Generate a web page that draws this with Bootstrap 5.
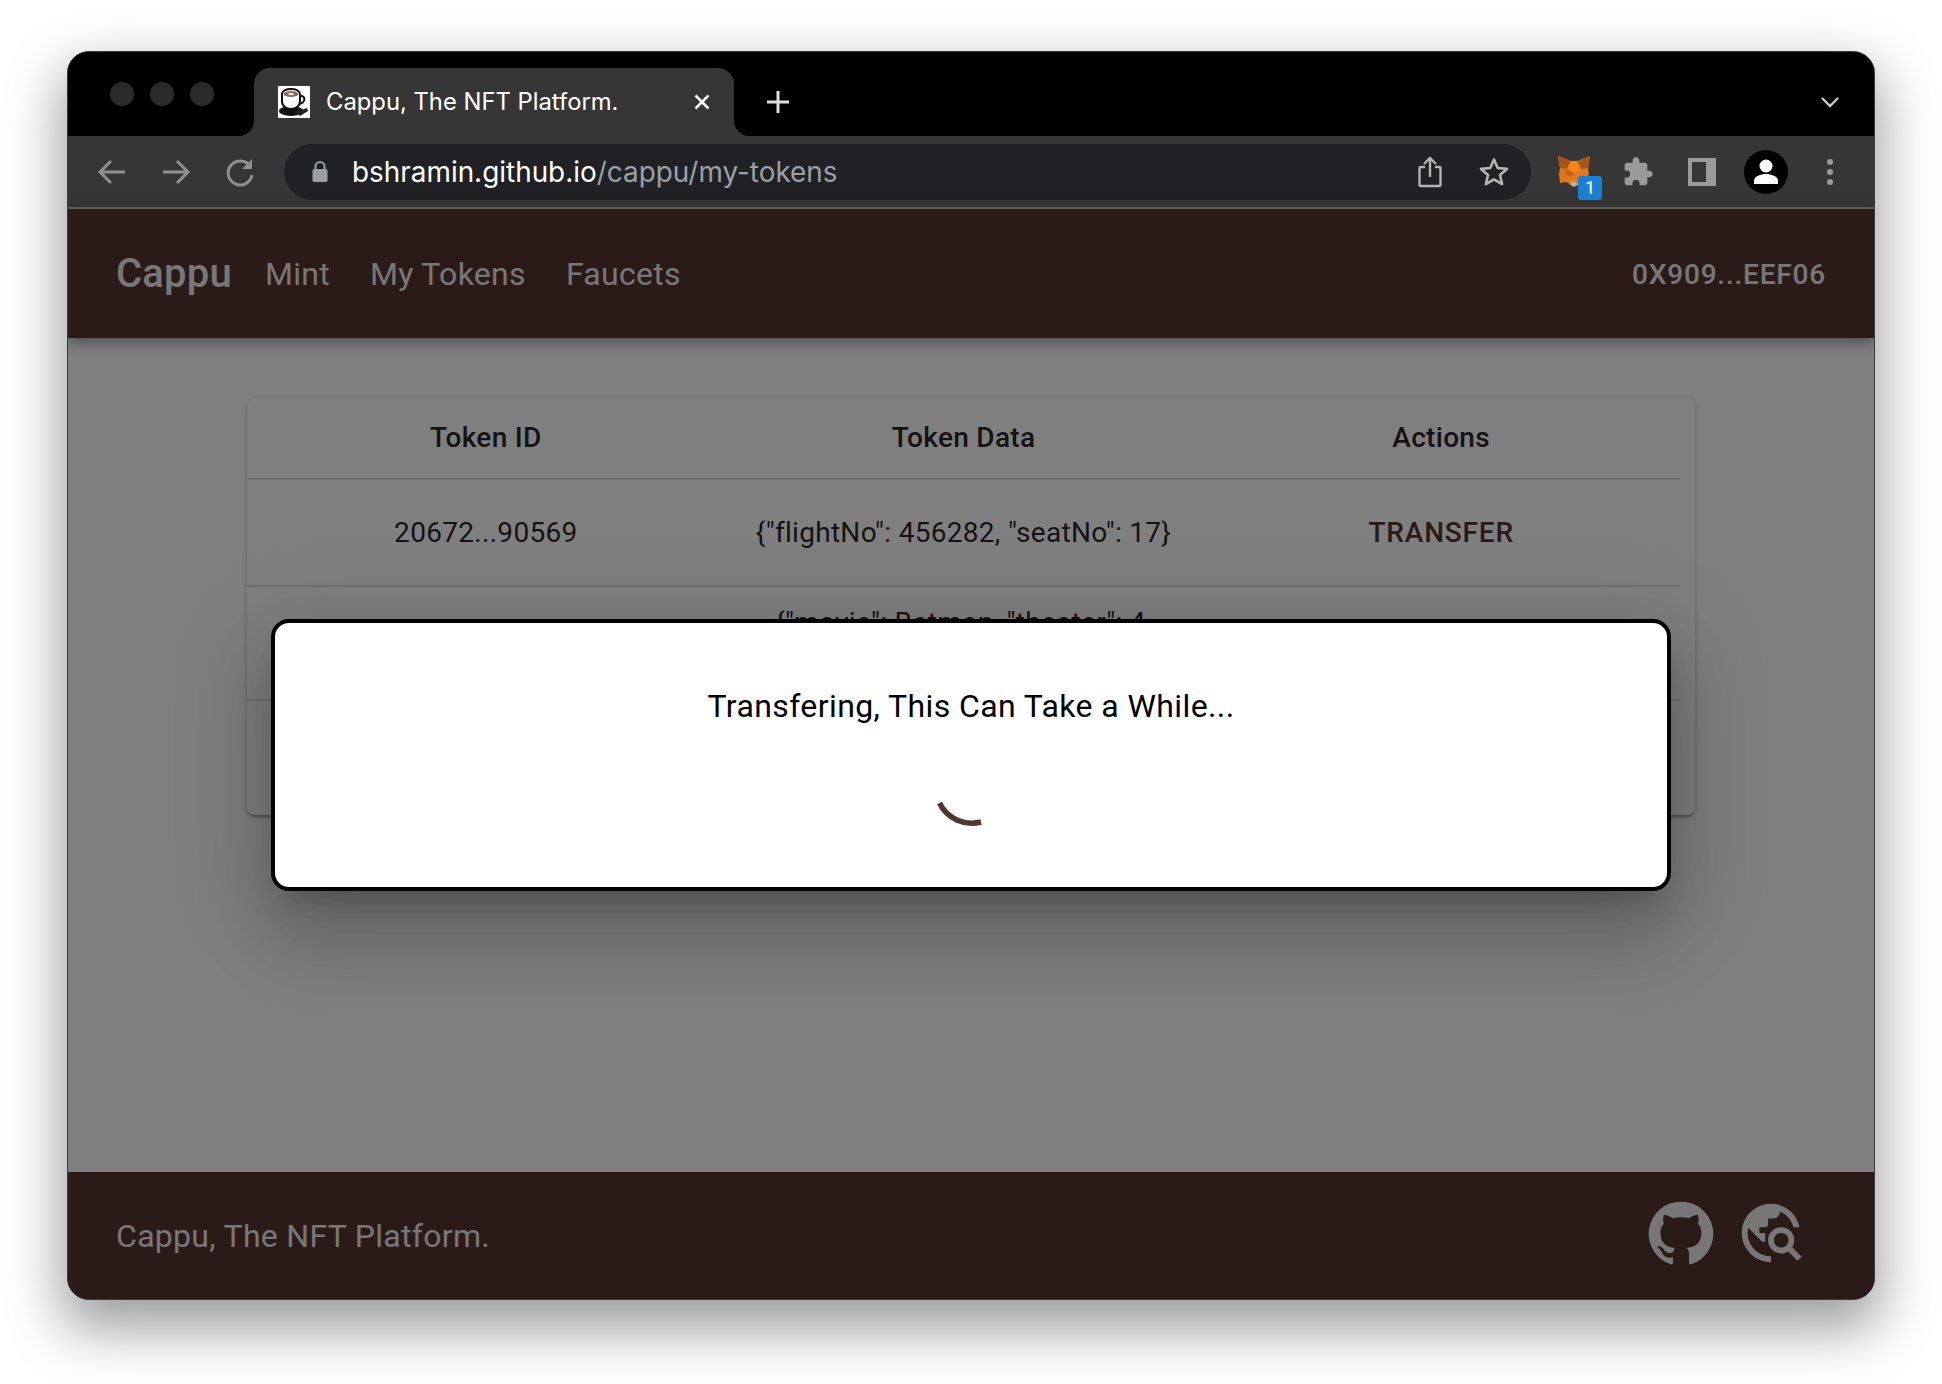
<!DOCTYPE html>
<html lang="en">
<head>
    <meta charset="UTF-8">
    <meta name="viewport" content="width=device-width, initial-scale=1.0">
    <title>Cappu, The NFT Platform.</title>
    <link rel="stylesheet" href="https://cdn.jsdelivr.net/npm/bootstrap@5.3.3/dist/css/bootstrap.min.css">
    <script src="https://cdn.jsdelivr.net/npm/bootstrap@5.3.3/dist/js/bootstrap.bundle.min.js"></script>
    <style>
        html, body { height: 100%; }
        body { background: #fff; font-family: Roboto, sans-serif; padding: 51px 67px 84px 67px; overflow: hidden; }

        .browser-win { width: 1808px; height: 1249px; border: 1px solid #3a3a3a; border-radius: 22px; overflow: hidden; box-shadow: 0 24px 54px 6px rgba(0,0,0,.38); background: #000; }

        .tab-strip { height: 84px; background: #000; padding-left: 42px; padding-right: 34px; flex-shrink: 0; }
        .light-dot { width: 24px; height: 24px; border-radius: 50%; background: #2a2a2a; }
        .lights-box { gap: 16px; margin-right: 40px; }
        .chrome-tab { position: relative; width: 480px; height: 68px; background: #363636; border-radius: 16px 16px 0 0; padding: 0 24px; color: #fff; font-family: Inter, sans-serif; font-size: 23.800px; }
        .chrome-tab::before, .chrome-tab::after { content: ""; position: absolute; bottom: 0; width: 16px; height: 16px; }
        .chrome-tab::before { left: -16px; background: radial-gradient(circle at 0 0, #000 16px, #363636 16.5px); }
        .chrome-tab::after { right: -16px; background: radial-gradient(circle at 100% 0, #000 16px, #363636 16.5px); }
        .new-tab { margin: 0 0 22px 32px; }
        .tab-chevron { margin-bottom: 28px; }

        .tool-bar { height: 73px; background: #363636; border-bottom: 2px solid #66605e; padding: 0 12px 0 28px; flex-shrink: 0; }
        .nav-arrows { gap: 32px; margin-right: 28px; }
        .url-pill { height: 56px; border-radius: 28px; background: #202124; padding: 0 22px 0 27px; font-family: Inter, sans-serif; font-size: 27.900px; color: #9aa0a6; margin-right: 11px; }
        .url-host { color: #fff; }
        .url-text { padding-top: 2px; }
        .lock-icon { margin-right: 19px; }
        .star-icon { margin-left: 37px; }
        .ext-slot { position: relative; width: 64px; height: 56px; }
        .ext-badge { position: absolute; left: 36px; top: 32px; width: 24px; height: 24px; border-radius: 3px; background: #1a7fd4; color: #fff; font-size: 18px; line-height: 24px; text-align: center; }

        .page-area { position: relative; min-height: 0; }
        .page-dim { position: absolute; inset: 0; background: rgba(0,0,0,.5); z-index: 5; }

        .app-bar { height: 129px; padding: 0 48px; background: #543630; box-shadow: 0 4px 8px -2px rgba(0,0,0,.2), 0 8px 10px 0 rgba(0,0,0,.14), 0 2px 20px 0 rgba(0,0,0,.12); z-index: 2; flex-shrink: 0; }
        .app-bar .navbar-brand { font-size: 40px; font-weight: 500; color: #eee; margin-right: 13px; padding: 0; letter-spacing: .2px; }
        .app-bar .nav-link { font-size: 32px; color: #eee; padding: 0 20px; letter-spacing: .3px; }
        .wallet-addr { font-size: 28px; font-weight: 500; color: #eee; letter-spacing: .8px; padding-top: 2px; }

        .page-main { background: #fff; padding: 60px 179px 0 179px; min-height: 0; }
        .token-card { border: 0; border-radius: 8px; padding-right: 15px; box-shadow: 0 4px 2px -2px rgba(0,0,0,.2), 0 2px 4px 0 rgba(0,0,0,.14), 0 2px 6px 0 rgba(0,0,0,.12); }
        .token-table { table-layout: fixed; margin: 0; font-size: 28px; line-height: 40px; text-align: center; letter-spacing: .3px; color: rgba(0,0,0,.87); }
        .token-table th { font-weight: 500; padding: 20px 28px; border-bottom: 2px solid #e0e0e0; }
        .token-table td { padding: 16px 28px; border-bottom: 2px solid #e0e0e0; vertical-align: middle; }
        .token-table tr:last-child td { border-bottom: 0; padding-bottom: 18px; }
        .btn-transfer { height: 73px; padding: 0 20px; font-size: 28px; font-weight: 500; color: #543630; letter-spacing: .8px; border: 0; text-transform: uppercase; }

        .page-foot { height: 127px; padding: 0 68px 0 48px; background: #543630; color: #eee; font-size: 32px; letter-spacing: .3px; flex-shrink: 0; }
        .foot-icons { gap: 20px; margin-bottom: 6px; }

        .wait-modal { width: 1400px; height: 272px; margin-top: 1px; background: #fff; border: 4px solid #000; border-radius: 18px; z-index: 6; color: #000; font-size: 32px; letter-spacing: .4px; text-align: center; padding-top: 63px; box-shadow: 0 22px 30px -14px rgba(0,0,0,.2), 0 48px 76px 6px rgba(0,0,0,.14), 0 18px 92px 16px rgba(0,0,0,.12); }
        .wait-text { line-height: 40px; margin-bottom: 21px; }
    </style>
</head>
<body>
<div class="browser-win d-flex flex-column">

    <!-- tab strip -->
    <div class="tab-strip d-flex align-items-end">
        <div class="lights-box d-flex align-self-center">
            <div class="light-dot"></div>
            <div class="light-dot"></div>
            <div class="light-dot"></div>
        </div>
        <div class="chrome-tab d-flex align-items-center">
            <svg class="me-3" width="32" height="32" viewBox="0 0 32 32">
                <rect width="32" height="32" fill="#fff"/>
                <ellipse cx="13" cy="25" rx="12" ry="5" fill="#111"/>
                <path d="M4 8c0-3 4-5 9-5s9 2 9 5v7c0 5-4 8-9 8s-9-3-9-8z" fill="#fff" stroke="#111" stroke-width="2"/>
                <ellipse cx="13" cy="8" rx="7.500" ry="3" fill="#8a6a58"/>
                <ellipse cx="13" cy="8" rx="3" ry="1.200" fill="#e9d9cc"/>
                <path d="M22 10c6-1 6 7-1 8" fill="none" stroke="#111" stroke-width="2"/>
                <path d="M17 26l12-4 1 3-8 5z" fill="#222"/>
            </svg>
            <span>Cappu, The NFT Platform.</span>
            <svg class="ms-auto" width="16" height="16" viewBox="0 0 16 16"><path d="M1.500 1.500l13 13M14.500 1.500l-13 13" stroke="#fff" stroke-width="2.600"/></svg>
        </div>
        <svg class="new-tab" width="24" height="24" viewBox="0 0 24 24"><path d="M12 1v22M1 12h22" stroke="#ddd" stroke-width="3"/></svg>
        <svg class="tab-chevron ms-auto" width="20" height="12" viewBox="0 0 20 12"><path d="M2 2l8 8 8-8" fill="none" stroke="#ccc" stroke-width="2.400"/></svg>
    </div>

    <!-- toolbar -->
    <div class="tool-bar d-flex align-items-center">
        <div class="nav-arrows d-flex">
            <svg width="32" height="32" viewBox="0 0 32 32"><path d="M29 16H5M15 5L4 16l11 11" fill="none" stroke="#8f8f8f" stroke-width="3"/></svg>
            <svg width="32" height="32" viewBox="0 0 32 32"><path d="M3 16h24M17 5l11 11-11 11" fill="none" stroke="#8f8f8f" stroke-width="3"/></svg>
            <svg width="32" height="32" viewBox="0 0 32 32"><path d="M26 10a12 12 0 1 0 2 9" fill="none" stroke="#8f8f8f" stroke-width="3"/><path d="M28 3v10H18z" fill="#8f8f8f"/></svg>
        </div>
        <div class="url-pill flex-grow-1 d-flex align-items-center">
            <svg class="lock-icon" width="18" height="24" viewBox="0 0 18 24"><path d="M4.500 10V6.500a4.500 4.500 0 0 1 9 0V10" fill="none" stroke="#9aa0a6" stroke-width="2"/><rect x="1.500" y="9" width="15" height="13" rx="2" fill="#9aa0a6"/></svg>
            <span class="url-text ms-1"><span class="url-host">bshramin.github.io</span>/cappu/my-tokens</span>
            <svg class="ms-auto" width="24" height="32" viewBox="0 0 24 32"><path d="M7 11H3a1.500 1.500 0 0 0-1.500 1.500v16A1.500 1.500 0 0 0 3 30h18a1.500 1.500 0 0 0 1.500-1.500v-16A1.500 1.500 0 0 0 21 11h-4M12 21V3M6 8l6-6 6 6" fill="none" stroke="#b4b4b4" stroke-width="2.400"/></svg>
            <svg class="star-icon" width="30" height="30" viewBox="0 0 30 30"><path d="M15 2.500l3.700 8.500 9.300.9-7 6.100 2.100 9.100-8.100-4.800-8.100 4.800 2.100-9.100-7-6.100 9.300-.9z" fill="none" stroke="#b4b4b4" stroke-width="2.600" stroke-linejoin="round"/></svg>
        </div>
        <div class="ext-slot d-flex align-items-center justify-content-center">
            <svg width="32" height="32" viewBox="0 0 32 32">
                <path d="M0 0l13 5h6L32 0l-2 12 1 6-4 8-5 3h-8l-6-3-6 1L1 18l1-6z" fill="#e2761b"/>
                <path d="M0 0l13 5-4 8-7-1z" fill="#a8551a"/>
                <path d="M32 0L19 5l4 8 7-1z" fill="#a8551a"/>
                <path d="M13 5h6l4 8-7 4-7-4z" fill="#f6851b"/>
                <path d="M9 13l7 4-3 4-6-3z" fill="#cd6116"/>
                <path d="M11 28l5-3 5 3-5 3z" fill="#c0ac9d"/>
            </svg>
            <span class="ext-badge">1</span>
        </div>
        <div class="ext-slot d-flex align-items-center justify-content-center">
            <svg width="32" height="32" viewBox="0 0 24 24"><path d="M20.500 11H19V7c0-1.100-.9-2-2-2h-4V3.500C13 2.120 11.880 1 10.500 1S8 2.120 8 3.500V5H4c-1.100 0-1.990.9-1.990 2v3.800H3.500c1.490 0 2.700 1.210 2.700 2.700s-1.210 2.700-2.700 2.700H2V20c0 1.100.9 2 2 2h3.800v-1.500c0-1.490 1.210-2.700 2.700-2.700 1.490 0 2.700 1.210 2.700 2.700V22H17c1.100 0 2-.9 2-2v-4h1.500c1.380 0 2.500-1.120 2.500-2.500S21.880 11 20.500 11z" fill="#9a9a9a"/></svg>
        </div>
        <div class="ext-slot d-flex align-items-center justify-content-center">
            <svg width="28" height="28" viewBox="0 0 28 28"><rect x="2" y="2" width="24" height="24" fill="none" stroke="#9a9a9a" stroke-width="4"/><rect x="18" y="2" width="8" height="24" fill="#9a9a9a"/></svg>
        </div>
        <div class="ext-slot d-flex align-items-center justify-content-center">
            <svg width="44" height="44" viewBox="0 0 44 44"><circle cx="22" cy="22" r="22" fill="#000"/><circle cx="22" cy="16" r="6.500" fill="#fff"/><path d="M10 34v-3c0-5 7-7 12-7s12 2 12 7v3z" fill="#fff"/></svg>
        </div>
        <div class="ext-slot d-flex align-items-center justify-content-center">
            <svg width="8" height="30" viewBox="0 0 8 30"><circle cx="4" cy="5" r="3" fill="#9a9a9a"/><circle cx="4" cy="15" r="3" fill="#9a9a9a"/><circle cx="4" cy="25" r="3" fill="#9a9a9a"/></svg>
        </div>
    </div>

    <!-- the page itself -->
    <div class="page-area flex-grow-1 d-flex flex-column">
        <nav class="navbar app-bar">
            <div class="d-flex align-items-center">
                <a class="navbar-brand" href="#">Cappu</a>
                <a class="nav-link" href="#">Mint</a>
                <a class="nav-link" href="#">My Tokens</a>
                <a class="nav-link" href="#">Faucets</a>
            </div>
            <span class="wallet-addr">0X909...EEF06</span>
        </nav>

        <main class="page-main flex-grow-1">
            <div class="card token-card">
                <table class="table token-table">
                    <thead>
                        <tr><th>Token ID</th><th>Token Data</th><th>Actions</th></tr>
                    </thead>
                    <tbody>
                        <tr>
                            <td>20672...90569</td>
                            <td>{"flightNo": 456282, "seatNo": 17}</td>
                            <td><button class="btn btn-transfer">Transfer</button></td>
                        </tr>
                        <tr>
                            <td>20672...90570</td>
                            <td>{"movie": Batman, "theater": 4, "seatNo": 21}</td>
                            <td><button class="btn btn-transfer">Transfer</button></td>
                        </tr>
                        <tr>
                            <td>20672...90571</td>
                            <td>{"movie": Batman, "theater": 4, "seatNo": 22}</td>
                            <td><button class="btn btn-transfer">Transfer</button></td>
                        </tr>
                    </tbody>
                </table>
            </div>
        </main>

        <footer class="page-foot d-flex align-items-center justify-content-between">
            <span>Cappu, The NFT Platform.</span>
            <div class="foot-icons d-flex">
                <svg width="70" height="70" viewBox="0 0 24 24"><path fill="#eee" d="M12 1.270a11 11 0 00-3.480 21.460c.55.09.73-.28.73-.55v-1.840c-3.030.64-3.670-1.460-3.670-1.460-.55-1.290-1.280-1.650-1.280-1.650-.92-.65.1-.65.1-.65 1.100 0 1.730 1.100 1.730 1.100.92 1.650 2.570 1.200 3.210.92a2 2 0 01.64-1.470c-2.470-.27-5.040-1.190-5.040-5.500 0-1.100.46-2.100 1.200-2.840a3.760 3.760 0 010-2.930s.91-.28 3.110 1.100c1.800-.49 3.700-.49 5.500 0 2.100-1.380 3.020-1.100 3.020-1.100a3.760 3.760 0 010 2.930c.83.74 1.200 1.740 1.200 2.940 0 4.210-2.570 5.130-5.040 5.400.45.37.82.92.82 2.020v3.030c0 .27.1.64.73.55A11 11 0 0012 1.270"/></svg>
                <svg width="70" height="70" viewBox="0 0 24 24"><path fill="#eee" d="M19.300 16.900c.4-.7.7-1.500.7-2.400 0-2.500-2-4.500-4.500-4.500S11 12 11 14.500s2 4.500 4.500 4.500c.9 0 1.700-.3 2.400-.7l3.200 3.200 1.400-1.400-3.200-3.200zm-3.800.1c-1.400 0-2.500-1.100-2.500-2.500s1.100-2.500 2.500-2.500 2.500 1.100 2.500 2.500-1.100 2.500-2.500 2.500zM12 20v2C6.480 22 2 17.520 2 12S6.480 2 12 2c4.840 0 8.870 3.440 9.800 8h-2.070c-.64-2.460-2.400-4.470-4.730-5.410V5c0 1.100-.9 2-2 2h-2v2c0 .55-.45 1-1 1H8v2h2v3H9l-4.790-4.790C4.080 10.790 4 11.380 4 12c0 4.410 3.590 8 8 8z"/></svg>
            </div>
        </footer>

        <!-- backdrop + dialog sit over the whole page -->
        <div class="page-dim"></div>
        <div class="wait-modal position-absolute top-50 start-50 translate-middle">
            <div class="wait-text">Transfering, This Can Take a While...</div>
            <svg width="80" height="80" viewBox="0 0 80 80"><path d="M8.500 56A36 36 0 0 0 50 75" fill="none" stroke="#543630" stroke-width="5.500"/></svg>
        </div>
    </div>
</div>
</body>
</html>
